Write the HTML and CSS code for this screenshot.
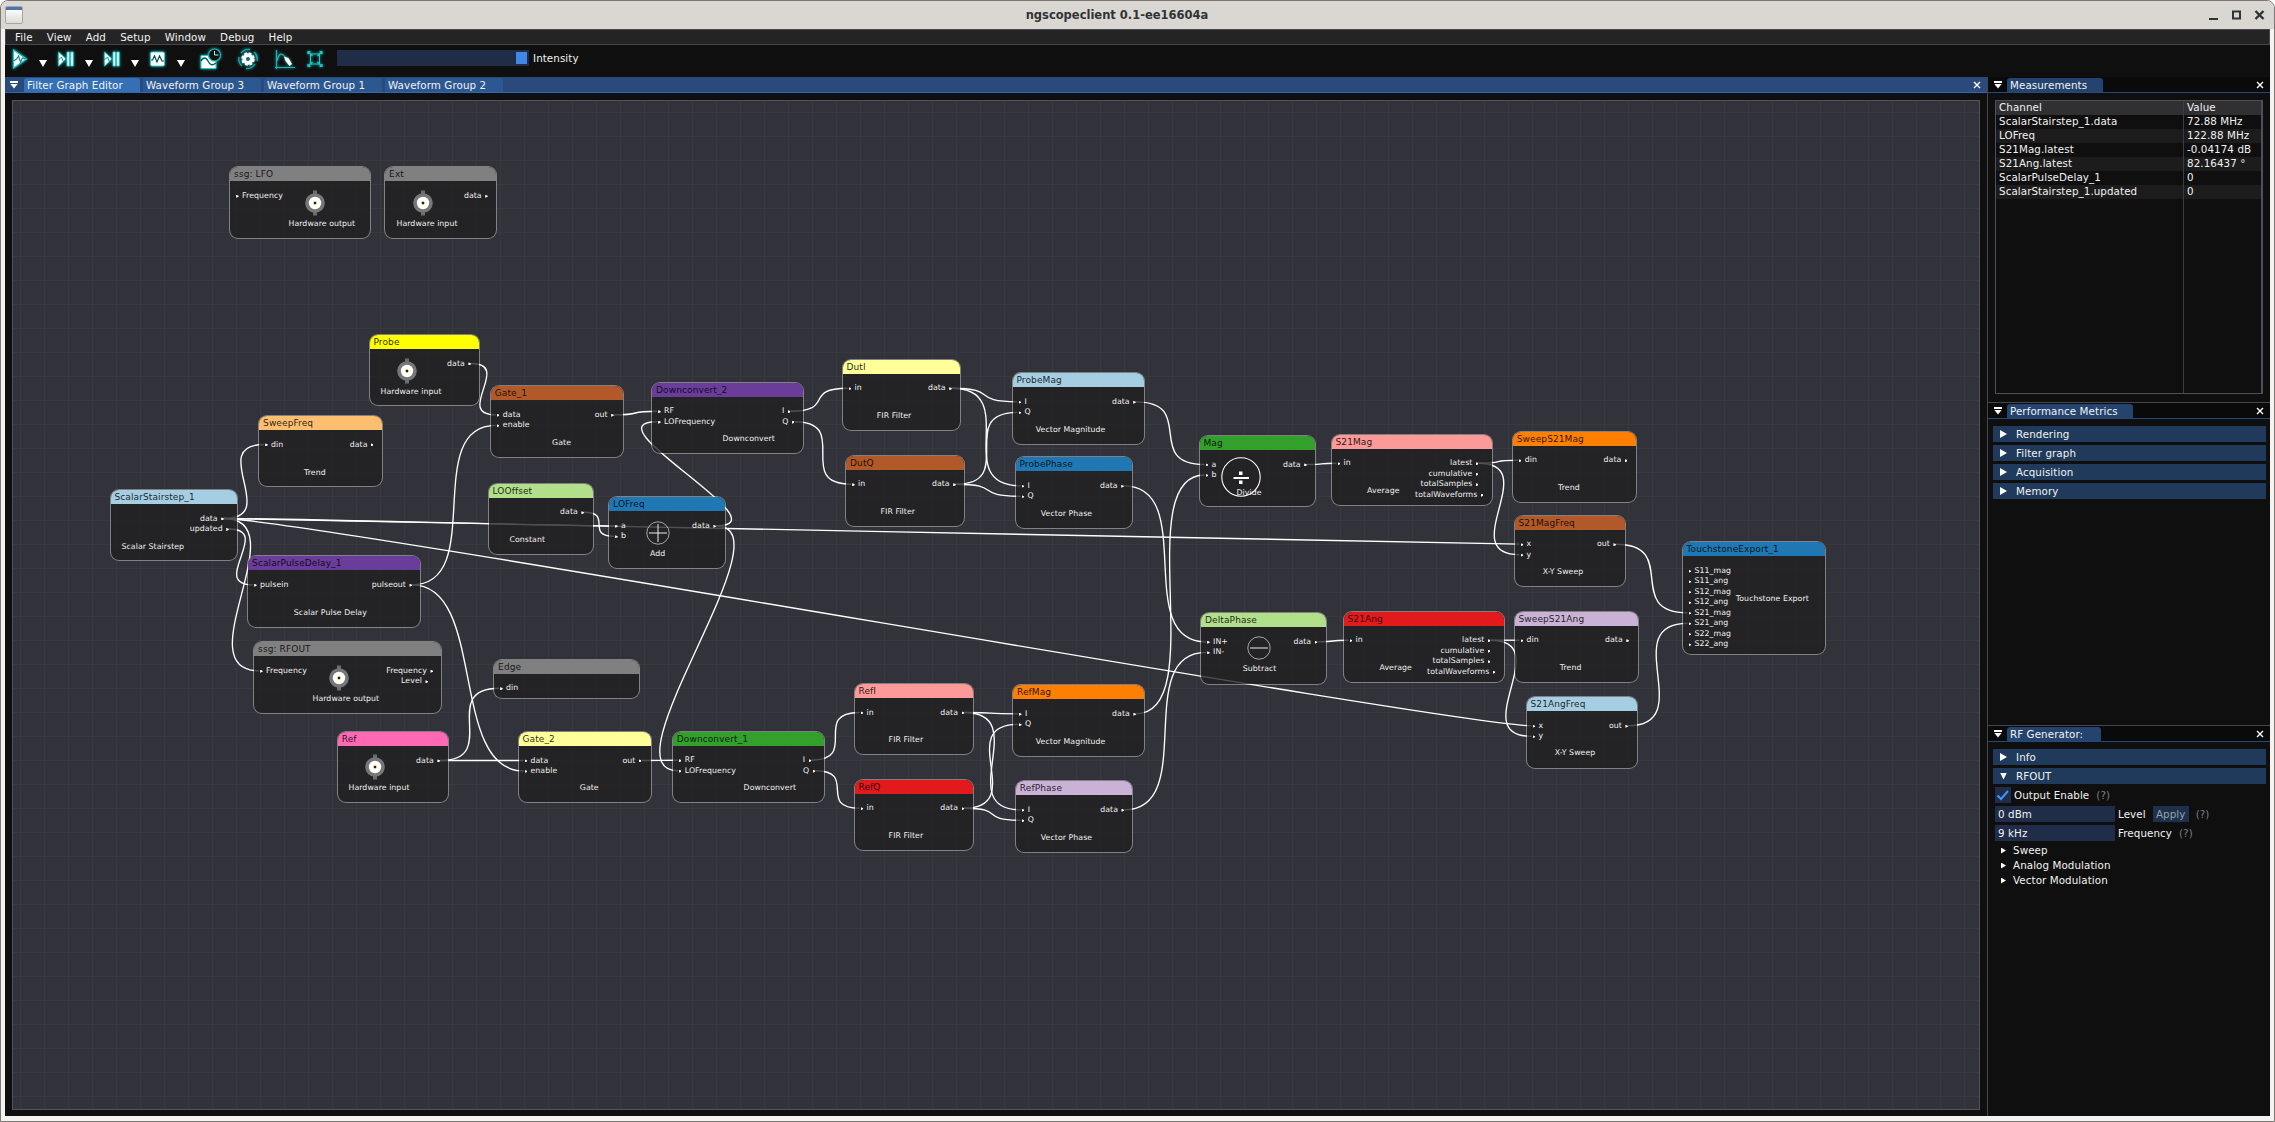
FILE: index.html
```
<!DOCTYPE html>
<html lang="en">
<head>
<meta charset="utf-8">
<title>ngscopeclient 0.1-ee16604a</title>
<link rel="stylesheet" href="styles.css">
</head>
<body>
<div class="window">
  <header class="titlebar">
    <span class="app-icon"></span>
    <h1 class="title">ngscopeclient 0.1-ee16604a</h1>
    <svg class="win-buttons" width="58" height="16" viewBox="0 0 58 16">
      <path d="M1 12h9" stroke="#2e3436" stroke-width="2"/>
      <rect x="25" y="4.500" width="7" height="7" fill="none" stroke="#2e3436" stroke-width="2"/>
      <path d="M47.500 4l8 8m0-8l-8 8" stroke="#2e3436" stroke-width="2.400"/>
    </svg>
  </header>
  <div class="client">
    <nav class="menubar">
      <span>File</span><span>View</span><span>Add</span><span>Setup</span><span>Window</span><span>Debug</span><span>Help</span>
    </nav>
    <div class="toolbar">
      <div class="tools">
        <svg class="tool" width="22" height="24" viewBox="0 0 22 24"><path d="M2.500 3v18L15.500 12z" fill="#fff" stroke="#1fc9c9" stroke-width="1.200"/><path d="M2.500 14l3-2 2-3 2 6 2-4 3 1" fill="none" stroke="#0c8f94" stroke-width="1.200"/></svg>
        <i class="drop"></i>
        <svg class="tool" width="22" height="24" viewBox="0 0 22 24"><path d="M1.500 5v14l7.500-7zM10 5h2.400v14H10zM13.800 5h2.400v14h-2.400z" fill="#fff" stroke="#1fc9c9" stroke-width=".8"/><path d="M1.500 13l3-3 2 5 3-4" fill="none" stroke="#0c8f94"/></svg>
        <i class="drop"></i>
        <svg class="tool" width="22" height="24" viewBox="0 0 22 24"><path d="M1.500 5v14l7.500-7zM10 5h2.400v14H10zM13.800 5h2.400v14h-2.400z" fill="#fff" stroke="#1fc9c9" stroke-width=".8"/><path d="M1.500 13l3-3 2 5 3-4" fill="none" stroke="#0c8f94"/></svg>
        <i class="drop"></i>
        <svg class="tool" width="22" height="24" viewBox="0 0 22 24"><rect x="1.500" y="5" width="14" height="14" rx="1.500" fill="#fff" stroke="#1fc9c9" stroke-width=".8"/><path d="M2 13h1.500l2-4 2.500 6 2.500-6 2.500 5h2" fill="none" stroke="#064d52" stroke-width="1.200"/></svg>
        <i class="drop"></i>
      </div>
      <svg class="tool schedule" width="26" height="24" viewBox="0 0 26 24"><path d="M2 8.500h9l6 6v7H2z" fill="#fff" stroke="#1fc9c9"/><path d="M2 14c2-4 5-4 7 0s4 5 8 2" fill="none" stroke="#075a5e" stroke-width="1.400"/><circle cx="15.500" cy="8" r="6" fill="#101010" stroke="#22b5b8" stroke-width="1.200"/><path d="M15.500 4v4h4" fill="none" stroke="#9ff"/></svg>
      <svg class="tool gear" width="26" height="24" viewBox="0 0 26 24"><circle cx="12" cy="12" r="5.500" fill="#fff" stroke="#fff" stroke-width="2.500" stroke-dasharray="2.700 1.620"/><circle cx="12" cy="12" r="5.400" fill="#fff"/><circle cx="12" cy="12" r="2" fill="#0b6d70"/><path d="M5 6a9.500 9.500 0 0 1 9-3.500M19 17a9.500 9.500 0 0 1-9 4.500M3 10a9.500 9.500 0 0 0 3 9M21 14a9.500 9.500 0 0 0-3-9" fill="none" stroke="#19a9ab" stroke-width="1.300"/></svg>
      <svg class="tool probe" width="26" height="24" viewBox="0 0 26 24"><path d="M3.500 3v19M2 20.500h20M4 14c2-8 5-9 8-4l3 6" fill="none" stroke="#1cb5b5" stroke-width="1.100"/><path d="M11 9.500l4.500 1.500 3.500 6-2.500 2-4-5z" fill="#fff"/></svg>
      <svg class="tool fit" width="22" height="24" viewBox="0 0 22 24"><rect x="5.500" y="7" width="9" height="10" fill="none" stroke="#1fc9c9"/><path d="M3 7V4.500h2.500M14.500 4.500h2.500v2.500M17 17v2.500h-2.500M5.500 19.500h-2.500v-2.500M3.500 5l4 4M16.500 5l-4 4M3.500 19l4-4M16.500 19l-4-4" fill="none" stroke="#1fc9c9" stroke-width="1.200"/></svg>
      <div class="slider"><span class="grab"></span></div>
      <label class="slider-label">Intensity</label>
    </div>
    <main class="dock">
      <section class="editor">
        <div class="tabbar focused">
          <i class="tab-menu"></i>
          <span class="tab active">Filter Graph Editor</span><span class="tab">Waveform Group 3</span><span class="tab">Waveform Group 1</span><span class="tab">Waveform Group 2</span>
          <svg class="close" width="8" height="8" viewBox="0 0 8 8"><path d="M1 1l6 6m0-6l-6 6"/></svg>
        </div>
        <div class="canvas-wrap"><div class="canvas" id="canvas"><svg class="links" id="links"></svg></div></div>
      </section>
      <aside class="side">
        <section class="panel measurements">
          <div class="tabbar">
            <i class="tab-menu"></i><span class="tab">Measurements</span>
            <svg class="close" width="8" height="8" viewBox="0 0 8 8"><path d="M1 1l6 6m0-6l-6 6"/></svg>
          </div>
          <div class="table">
            <div class="row head"><span>Channel</span><span>Value</span></div>
            <div class="row"><span>ScalarStairstep_1.data</span><span>72.88 MHz</span></div>
            <div class="row alt"><span>LOFreq</span><span>122.88 MHz</span></div>
            <div class="row"><span>S21Mag.latest</span><span>-0.04174 dB</span></div>
            <div class="row alt"><span>S21Ang.latest</span><span>82.16437 °</span></div>
            <div class="row"><span>ScalarPulseDelay_1</span><span>0</span></div>
            <div class="row alt"><span>ScalarStairstep_1.updated</span><span>0</span></div>
            <div class="row fill"><span></span><span></span></div>
          </div>
        </section>
        <section class="panel metrics">
          <div class="tabbar">
            <i class="tab-menu"></i><span class="tab">Performance Metrics</span>
            <svg class="close" width="8" height="8" viewBox="0 0 8 8"><path d="M1 1l6 6m0-6l-6 6"/></svg>
          </div>
          <div class="headers">
            <div class="collapse"><i class="tri"></i>Rendering</div>
            <div class="collapse"><i class="tri"></i>Filter graph</div>
            <div class="collapse"><i class="tri"></i>Acquisition</div>
            <div class="collapse"><i class="tri"></i>Memory</div>
          </div>
        </section>
        <section class="panel generator">
          <div class="tabbar">
            <i class="tab-menu"></i><span class="tab">RF Generator:</span>
            <svg class="close" width="8" height="8" viewBox="0 0 8 8"><path d="M1 1l6 6m0-6l-6 6"/></svg>
          </div>
          <div class="headers">
            <div class="collapse"><i class="tri"></i>Info</div>
            <div class="collapse"><i class="tri open"></i>RFOUT</div>
          </div>
          <div class="form">
            <div class="field"><span class="check"><svg width="16" height="16" viewBox="0 0 16 16"><path d="M2.500 8.500l3.500 3.500 7-8" fill="none" stroke="#4296fa" stroke-width="2"/></svg></span><span>Output Enable</span><span class="hint">(?)</span></div>
            <div class="field"><span class="input">0 dBm</span><span>Level</span><span class="button">Apply</span><span class="hint">(?)</span></div>
            <div class="field"><span class="input">9 kHz</span><span>Frequency</span><span class="hint">(?)</span></div>
          </div>
          <div class="tree">
            <div class="leaf"><i class="tri small"></i>Sweep</div>
            <div class="leaf"><i class="tri small"></i>Analog Modulation</div>
            <div class="leaf"><i class="tri small"></i>Vector Modulation</div>
          </div>
        </section>
      </aside>
    </main>
  </div>
</div>
<script src="graph.js"></script>
</body>
</html>
```
FILE: styles.css
```
* { box-sizing: border-box; }
body { margin: 0; background: #fff; font: 10.3px/14px "DejaVu Sans", sans-serif; letter-spacing: .09px; color: #f2f2f2; overflow: hidden; }
.window { width: 2275px; height: 1122px; display: flex; flex-direction: column; background: #f4f3f2; border: 1px solid #7b7875; border-radius: 8px 8px 0 0; overflow: hidden; padding: 0 4px 5px 4px; }
.titlebar { flex: none; height: 28px; margin: 0 -4px; background: #dad6d2; display: flex; align-items: center; padding: 0 8px 0 4px; }
.app-icon { width: 18px; height: 18px; border: 1px solid #aaa69f; border-radius: 2px; background: linear-gradient(#4a75b0 0 3px, #fbfbfa 3px, #dcdcd8); }
.title { flex: 1; margin: 0; text-align: center; font-size: 11.5px; letter-spacing: 0; line-height: 16px; color: #2e3436; font-weight: bold; padding-left: 3px; }
.client { flex: 1; min-height: 0; display: flex; flex-direction: column; background: #0f0f0f; }
.menubar { flex: none; height: 16px; background: #242424; border: 1px solid #46464e; display: flex; padding-left: 9px; gap: 14.2px; line-height: 15px; }
.toolbar { flex: none; height: 32px; display: flex; align-items: flex-start; padding: 2px 0 0 6px; }
.tools { display: flex; }
.tool { flex: none; filter: drop-shadow(0 0 1.500px #18b9bd); }
.drop { width: 8px; height: 7px; margin: 13px 10px 0 6px; background: #fff; clip-path: polygon(0 0, 100% 0, 50% 100%); }
.schedule { margin-left: 4px; }
.gear { margin-left: 11px; }
.probe { margin-left: 11px; }
.fit { margin-left: 6px; }
.slider { width: 192px; height: 16px; margin: 3px 4px 0 10px; background: #1f2d48; padding: 2px; display: flex; justify-content: flex-end; }
.grab { width: 11px; height: 12px; background: #4187e6; }
.slider-label { margin-top: 4px; }
.dock { flex: 1; min-height: 0; display: flex; }
.editor { flex: none; width: 1983px; display: flex; flex-direction: column; border-right: 1px solid #46464e; }
.tabbar { flex: none; height: 16px; display: flex; align-items: flex-end; background: #0a0a0a; border-bottom: 1px solid #24497c; padding: 0 6px 0 6px; }
.tabbar.focused { background: #2a4a7b; border-bottom-color: #3268b2; padding-left: 5px; }
.tab-menu { align-self: center; width: 8px; height: 8px; margin-right: 5px; border-top: 2px solid #fff; }
.tab-menu::after { content: ""; display: block; margin-top: 1px; height: 5px; background: #fff; clip-path: polygon(0 0, 100% 0, 50% 100%); }
.tab { height: 14px; width: 96px; padding-left: 3px; background: #24436e; border-radius: 3px 3px 0 0; line-height: 14px; white-space: nowrap; }
.metrics .tab { width: 126px; }
.generator .tab { width: 94px; }
.focused .tab { width: 118px; margin-right: 3px; background: #2c5892; }
.focused .tab-menu { margin-right: 6px; }
.focused .tab.active { width: 116px; background: #3470b6; }
.close { margin: 0 0 3px auto; stroke: #fff; stroke-width: 1.400; }
.canvas-wrap { flex: 1; min-height: 0; padding: 7px 7px 6px; display: flex; }
.canvas { position: relative; flex: 1; border: 1px solid #55515f; overflow: hidden; background-color: #32323a;
  background-image: linear-gradient(90deg, #38383d 1px, transparent 1px), linear-gradient(#38383d 1px, transparent 1px);
  background-size: 24px 24px; background-position: 7px 0, 0 11px; }
.links { position: absolute; inset: 0; width: 100%; height: 100%; fill: none; stroke: #fff; stroke-width: 1.350; }
.node { position: absolute; height: 72.300px; border-radius: 9px; border: 1.200px solid rgba(255,255,255,.38); background: rgba(32,32,32,.785) padding-box; overflow: hidden; font-size: 7.800px; line-height: 10.500px; letter-spacing: .06px; white-space: nowrap; }
.node-title { height: 14px; padding-left: 4px; font-size: 9px; line-height: 15.5px; letter-spacing: .1px; color: rgba(0,0,0,.85); }
.ports { display: flex; justify-content: space-between; padding: 9.700px 0 0 6px; }
.ins, .outs { display: flex; flex-direction: column; }
.outs { align-items: flex-end; }
.port { display: flex; align-items: center; gap: 3.500px; height: 10.500px; }
.pin { width: 2.500px; height: 3px; background: #fff; clip-path: polygon(0 0, 100% 30%, 100% 70%, 0 100%); }
.caption { position: absolute; }
.glyph { position: absolute; overflow: visible; }
.panel { display: flex; flex-direction: column; }
.side { flex: 1; display: flex; flex-direction: column; }
.measurements { height: 325px; }
.metrics { height: 323px; border-top: 1px solid #46464e; }
.generator { flex: 1; border-top: 1px solid #46464e; }
.table { flex: 1; margin: 7px 7px 8px; border: 1px solid #4f4f59; border-right-width: 2px; display: flex; flex-direction: column; }
.row { display: grid; grid-template-columns: 187px 1fr; height: 14px; line-height: 13px; }
.row span { padding-left: 3px; white-space: nowrap; }
.row span + span { border-left: 1px solid #3c3c44; }
.row.alt { background: #1c1c1c; }
.row.head { background: #303032; }
.row.fill { flex: 1; }
.headers { display: flex; flex-direction: column; gap: 3px; padding: 7px 4px 3px 5px; }
.collapse { height: 16px; line-height: 16px; background: #1f3a5a; display: flex; align-items: center; padding-left: 7px; gap: 9px; }
.tri { flex: none; width: 7px; height: 8px; background: #fff; clip-path: polygon(0 0, 100% 50%, 0 100%); }
.tri.open { height: 7px; clip-path: polygon(0 0, 100% 0, 50% 100%); }
.tri.small { width: 5px; height: 6px; }
.form { display: flex; flex-direction: column; gap: 3px; padding-left: 7px; }
.field { display: flex; height: 16px; line-height: 16px; }
.check { width: 16px; height: 16px; background: #1f2d48; margin-right: 3px; }
.input { width: 120px; padding-left: 3px; background: #1f2d48; margin-right: 3px; }
.hint { color: #7f7f7f; margin-left: 7px; }
.button { width: 36px; margin-left: 7px; text-align: center; background: #1d314c; color: #97a1ad; }
.tree { padding: 2px 0 0 13px; }
.leaf { height: 15px; line-height: 15px; display: flex; align-items: center; gap: 7px; }
```
FILE: graph.js
```
// Screen position of the canvas origin; node coordinates are window coordinates.
const OX = 13.2, OY = 101;
// id, x, y, width, colour, inputs, outputs [label, pin distance from right edge], caption, caption x, caption y, options
const nodes = [
  ['ssg: LFO', 229.3, 166.3, 141.7, '#808080', ['Frequency'], [], 'Hardware output', 288.7, 223.7, {icon: ['coax', 315.7, 203.3]}],
  ['Ext', 384.3, 166.3, 112.7, '#808080', [], [['data', 11]], 'Hardware input', 396.7, 223.7, {icon: ['coax', 423.7, 203.3]}],
  ['Probe', 368.7, 334, 111.5, '#ffff00', [], [['data', 11]], 'Hardware input', 380.7, 391.2, {icon: ['coax', 407, 370.7]}],
  ['SweepFreq', 258.3, 415, 124.5, '#fdbf6f', ['din'], [['data', 11]], 'Trend', 304.3, 472.2],
  ['ScalarStairstep_1', 109.7, 489, 128.3, '#a6cee3', [], [['data', 16], ['updated', 11]], 'Scalar Stairstep', 121.7, 546.2],
  ['Gate_1', 490, 385.3, 134, '#b15928', ['data', 'enable'], [['out', 12]], 'Gate', 552.3, 442.7],
  ['Downconvert_2', 651.3, 381.7, 152.4, '#6a3d9a', ['RF', 'LOFrequency'], [['I', 15], ['Q', 11]], 'Downconvert', 722.7, 439.1],
  ['LOOffset', 487.7, 482.7, 106, '#b2df8a', [], [['data', 11.500]], 'Constant', 509.7, 539.4],
  ['LOFreq', 608.3, 496.3, 117.4, '#1f78b4', ['a', 'b'], [['data', 11.500]], 'Add', 650.3, 553.7, {icon: ['plus', 658.3, 533.3]}],
  ['DutI', 841.7, 358.7, 119.3, '#ffff99', ['in'], [['data', 11]], 'FIR Filter', 877, 415.5],
  ['DutQ', 845.3, 454.7, 119.7, '#b15928', ['in'], [['data', 11]], 'FIR Filter', 880.7, 511.5],
  ['ProbeMag', 1011.7, 372.3, 133.3, '#a6cee3', ['I', 'Q'], [['data', 11]], 'Vector Magnitude', 1036, 429.3],
  ['ProbePhase', 1014.7, 456.3, 118.3, '#1f78b4', ['I', 'Q'], [['data', 11]], 'Vector Phase', 1041, 513.3],
  ['Mag', 1198.7, 435, 117.3, '#33a02c', ['a', 'b'], [['data', 11]], 'Divide', 1236.700, 492.200, {icon: ['divide', 1241.300, 477.300]}],
  ['S21Mag', 1330.700, 433.700, 162, '#fb9a99', ['in'], [['latest', 16], ['cumulative', 16], ['totalSamples', 16], ['totalWaveforms', 11]], 'Average', 1367.300, 490.700],
  ['SweepS21Mag', 1512, 430.700, 124.700, '#ff7f00', ['din'], [['data', 11]], 'Trend', 1558.300, 487.700],
  ['S21MagFreq', 1513.700, 514.700, 112, '#b15928', ['x', 'y'], [['out', 11.500]], 'X-Y Sweep', 1543, 571.700],
  ['DeltaPhase', 1200.300, 612.300, 126.700, '#b2df8a', ['IN+', 'IN-'], [['data', 11.500]], 'Subtract', 1243, 669.200, {icon: ['minus', 1259.700, 648.300]}],
  ['S21Ang', 1342.700, 610.700, 162, '#e31a1c', ['in'], [['latest', 16], ['cumulative', 16], ['totalSamples', 16], ['totalWaveforms', 11]], 'Average', 1379.700, 667.700],
  ['SweepS21Ang', 1513.700, 610.700, 124.900, '#cab2d6', ['din'], [['data', 11.500]], 'Trend', 1560, 667.700],
  ['S21AngFreq', 1525.700, 696.300, 112, '#a6cee3', ['x', 'y'], [['out', 11.500]], 'X-Y Sweep', 1555, 753.200],
  ['TouchstoneExport_1', 1681.700, 541.300, 144.500, '#1f78b4', ['S11_mag', 'S11_ang', 'S12_mag', 'S12_ang', 'S21_mag', 'S21_ang', 'S22_mag', 'S22_ang'], [], 'Touchstone Export', 1736, 598.700, {h: 114}],
  ['ScalarPulseDelay_1', 247.300, 555.300, 174, '#6a3d9a', ['pulsein'], [['pulseout', 11]], 'Scalar Pulse Delay', 294, 612.300],
  ['ssg: RFOUT', 253.300, 641.300, 189, '#808080', ['Frequency'], [['Frequency', 11], ['Level', 16]], 'Hardware output', 312.700, 698.300, {icon: ['coax', 339.700, 678]}],
  ['Edge', 493.300, 658.700, 147, '#808080', ['din'], [], '', 0, 0, {h: 40}],
  ['Ref', 336.900, 731, 112.300, '#ff69b4', [], [['data', 11]], 'Hardware input', 348.700, 787.900, {icon: ['coax', 375.700, 767.300]}],
  ['Gate_2', 517.700, 731, 134, '#ffff99', ['data', 'enable'], [['out', 12]], 'Gate', 580, 787.900],
  ['Downconvert_1', 672, 730.700, 152.500, '#33a02c', ['RF', 'LOFrequency'], [['I', 15], ['Q', 11]], 'Downconvert', 743.800, 787.900],
  ['RefI', 853.700, 683, 119.600, '#fb9a99', ['in'], [['data', 11]], 'FIR Filter', 888.800, 739.700],
  ['RefQ', 853.700, 778.700, 119.600, '#e31a1c', ['in'], [['data', 11]], 'FIR Filter', 888.800, 835.400],
  ['RefMag', 1012.200, 684.300, 133, '#ff7f00', ['I', 'Q'], [['data', 11]], 'Vector Magnitude', 1036, 741.300],
  ['RefPhase', 1015, 780.300, 118.300, '#cab2d6', ['I', 'Q'], [['data', 11]], 'Vector Phase', 1041, 837.300],
];
// source node, output index, target node, input index
const links = [
  ['ScalarStairstep_1', 0, 'SweepFreq', 0], ['ScalarStairstep_1', 0, 'LOFreq', 0],
  ['ScalarStairstep_1', 0, 'S21MagFreq', 0], ['ScalarStairstep_1', 0, 'S21AngFreq', 0],
  ['ScalarStairstep_1', 0, 'ssg: RFOUT', 0], ['ScalarStairstep_1', 1, 'ScalarPulseDelay_1', 0],
  ['ScalarPulseDelay_1', 0, 'Gate_1', 1], ['ScalarPulseDelay_1', 0, 'Gate_2', 1],
  ['Probe', 0, 'Gate_1', 0], ['Ref', 0, 'Edge', 0], ['Ref', 0, 'Gate_2', 0],
  ['Gate_1', 0, 'Downconvert_2', 0], ['Gate_2', 0, 'Downconvert_1', 0],
  ['LOOffset', 0, 'LOFreq', 1], ['LOFreq', 0, 'Downconvert_2', 1], ['LOFreq', 0, 'Downconvert_1', 1],
  ['Downconvert_2', 0, 'DutI', 0], ['Downconvert_2', 1, 'DutQ', 0],
  ['DutI', 0, 'ProbeMag', 0], ['DutI', 0, 'ProbePhase', 0], ['DutQ', 0, 'ProbeMag', 1], ['DutQ', 0, 'ProbePhase', 1],
  ['Downconvert_1', 0, 'RefI', 0], ['Downconvert_1', 1, 'RefQ', 0],
  ['RefI', 0, 'RefMag', 0], ['RefI', 0, 'RefPhase', 0], ['RefQ', 0, 'RefMag', 1], ['RefQ', 0, 'RefPhase', 1],
  ['ProbeMag', 0, 'Mag', 0], ['RefMag', 0, 'Mag', 1], ['ProbePhase', 0, 'DeltaPhase', 0], ['RefPhase', 0, 'DeltaPhase', 1],
  ['Mag', 0, 'S21Mag', 0], ['DeltaPhase', 0, 'S21Ang', 0],
  ['S21Mag', 0, 'SweepS21Mag', 0], ['S21Mag', 0, 'S21MagFreq', 1],
  ['S21Ang', 0, 'SweepS21Ang', 0], ['S21Ang', 0, 'S21AngFreq', 1],
  ['S21MagFreq', 0, 'TouchstoneExport_1', 4], ['S21AngFreq', 0, 'TouchstoneExport_1', 5],
];
const glyphs = {
  coax: '<rect x="-2" y="-12.500" width="4" height="25" fill="#6c6c6c"/><circle r="9.800" fill="#777"/><circle r="6.200" fill="#fff"/><circle r="1.700" fill="#d9962a"/><circle r="1.100" fill="#000"/>',
  plus: '<circle r="11.200" fill="none" stroke="#ddd" stroke-width=".7"/><path d="M-9 0H9M0-9V9" stroke="#eee" stroke-width="1"/>',
  minus: '<circle r="11.200" fill="none" stroke="#ddd" stroke-width=".7"/><path d="M-9 0H9" stroke="#eee" stroke-width="1"/>',
  divide: '<circle r="19.200" fill="none" stroke="#fff" stroke-width="1.100"/><path d="M-7.500 1H8" stroke="#fff" stroke-width="1.800"/><rect x="-2" y="-5.500" width="3.500" height="3.500" fill="#fff"/><rect x="-2" y="3.500" width="3.500" height="3.500" fill="#fff"/>',
};
const byName = {};
let html = '';
for (const [name, x, y, w, color, ins, outs, caption, cx, cy, opt = {}] of nodes) {
  byName[name] = {x, y, w, outs};
  const pin = '<i class="pin"></i>';
  const left = ins.map(p => `<span class="port">${pin}${p}</span>`).join('');
  const right = outs.map(([p, d]) => `<span class="port" style="margin-right:${d - 2.5}px">${p}${pin}</span>`).join('');
  html += `<div class="node" style="left:${x - OX}px;top:${y - OY}px;width:${w + 0.4}px;${opt.h ? `height:${opt.h}px` : ''}">`
    + `<div class="node-title" style="background:${color}">${name}</div>`
    + `<div class="ports"><div class="ins">${left}</div><div class="outs">${right}</div></div>`
    + (caption ? `<span class="caption" style="left:${cx - x - 1}px;top:${cy - y - 5.7}px">${caption}</span>` : '')
    + (opt.icon ? `<svg class="glyph" width="1" height="1" style="left:${opt.icon[1] - x - 1}px;top:${opt.icon[2] - y - 1}px">${glyphs[opt.icon[0]]}</svg>` : '')
    + '</div>';
}
document.getElementById('canvas').insertAdjacentHTML('beforeend', html);
document.getElementById('links').innerHTML = links.map(([a, o, b, i]) => {
  const s = byName[a], t = byName[b];
  const x1 = s.x + s.w - s.outs[o][1] + 2 - OX, y1 = s.y + 29.500 + o * 10.500 - OY;
  const x2 = t.x + 6 - OX, y2 = t.y + 29.500 + i * 10.500 - OY;
  const half = Math.hypot(x2 - x1, y2 - y1) / 2;
  const k = half < 75 ? 75 * Math.sin(Math.PI / 2 * half / 75) : 75;
  return `<path d="M${x1} ${y1}C${x1 + k} ${y1} ${x2 - k} ${y2} ${x2} ${y2}"/>`;
}).join('');
```
